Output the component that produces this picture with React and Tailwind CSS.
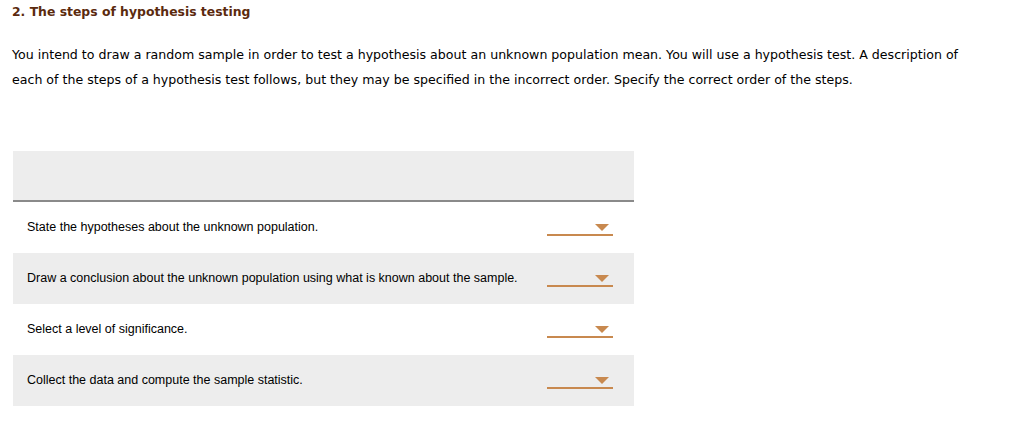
import React from 'react'

// Steps shown in the ordering table, in the order they appear on screen
const steps = [
  'State the hypotheses about the unknown population.',
  'Draw a conclusion about the unknown population using what is known about the sample.',
  'Select a level of significance.',
  'Collect the data and compute the sample statistic.',
]

function Dropdown() {
  return (
    <div className="relative w-[66px] h-[14px]">
      <svg className="absolute right-[4px] top-[2px]" width="14" height="7" viewBox="0 0 14 7">
        <polygon points="0,0 14,0 7,7" fill="#c8894f" />
      </svg>
      <div className="absolute left-0 right-0 bottom-0 h-[2px] bg-[#c8894f]" />
    </div>
  )
}

export default function App() {
  return (
    <div className="w-[1024px] h-[431px] bg-white overflow-hidden">
      {/* ── HEADING ─────────────────────────────── */}
      <h1 className="pl-[12px] pt-[3px] text-[12.4px] leading-[18px] font-bold text-[#5b2a0e] font-['DejaVu_Sans',Verdana,sans-serif]">
        2. The steps of hypothesis testing
      </h1>

      {/* ── INSTRUCTIONS ────────────────────────── */}
      <div className="pl-[12px] mt-[21px] text-[12.6px] leading-[25px] text-black font-['DejaVu_Sans',Verdana,sans-serif]">
        <p>You intend to draw a random sample in order to test a hypothesis about an unknown population mean. You will use a hypothesis test. A description of</p>
        <p>each of the steps of a hypothesis test follows, but they may be specified in the incorrect order. Specify the correct order of the steps.</p>
      </div>

      {/* ── ORDERING TABLE ──────────────────────── */}
      <div className="ml-[13px] mt-[59px] w-[621px] bg-[#ededed] font-['Liberation_Sans',Arial,sans-serif] text-[12.5px] text-black">
        <div className="h-[51px] border-b-2 border-[#8a8a8a]" />
        {steps.map((s, i) => (
          <div
            key={i}
            className={`flex items-center justify-between h-[51px] pl-[14px] pr-[21px] ${i % 2 === 0 ? 'bg-white' : 'bg-[#ededed]'}`}
          >
            <span>{s}</span>
            <div className="mt-[2px]">
              <Dropdown />
            </div>
          </div>
        ))}
      </div>
    </div>
  )
}
